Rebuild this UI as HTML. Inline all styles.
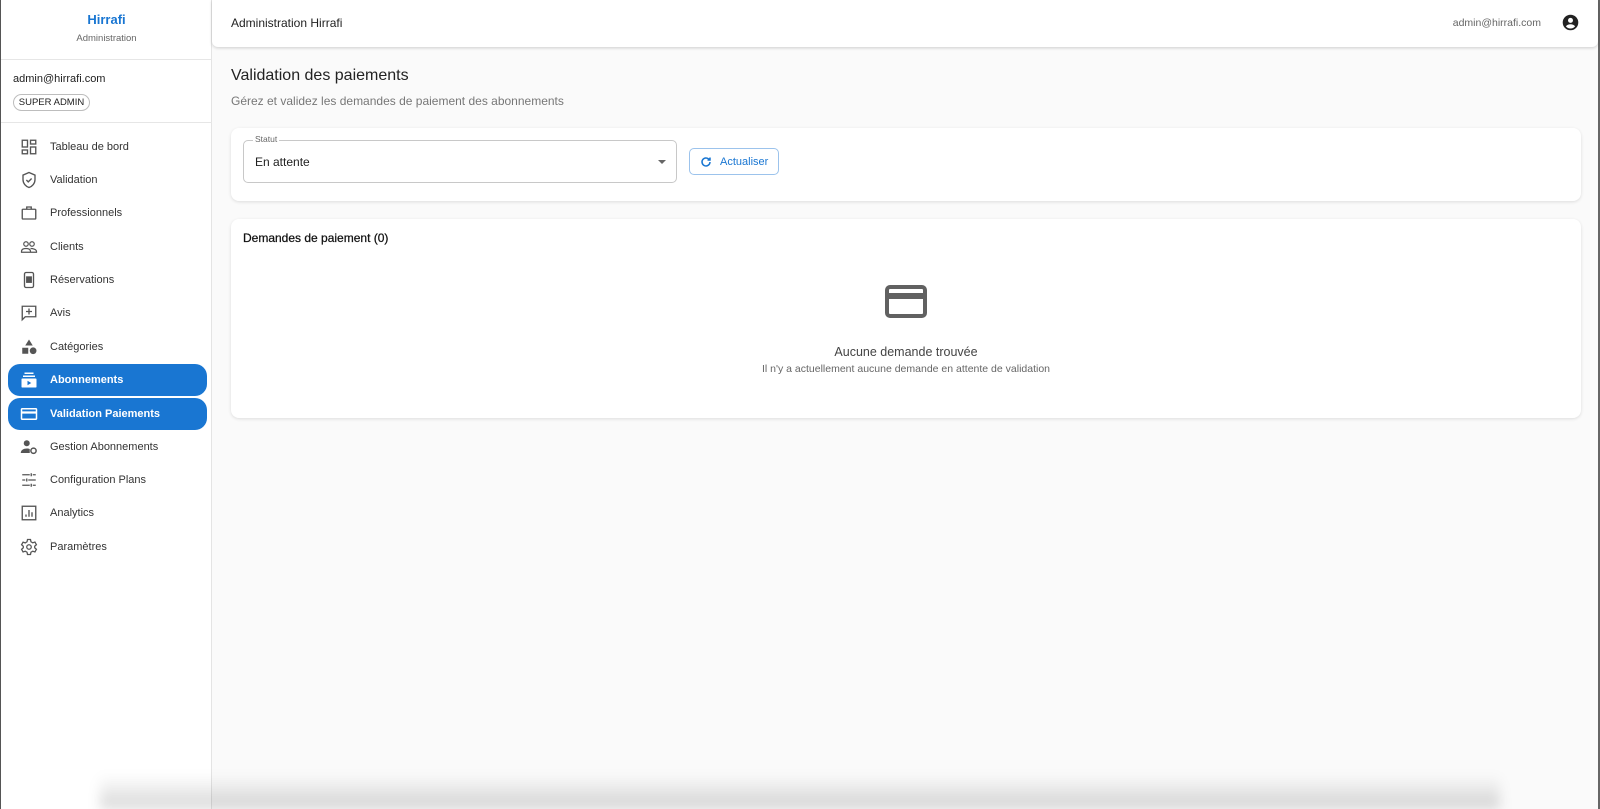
<!DOCTYPE html>
<html><head><meta charset="utf-8"><style>
*{box-sizing:border-box;margin:0;padding:0}
body{width:1600px;height:809px;overflow:hidden;background:#fafafa;font-family:"Liberation Sans",Roboto,sans-serif;position:relative;color:#212121}
.side{position:absolute;left:1px;top:0;width:211px;height:809px;background:#fff;border-right:1px solid #e4e4e4}
.brand{text-align:center;height:60px;border-bottom:1px solid #e6e6e6}
.brand .t{position:absolute;left:0;width:211px;top:12px;color:#1976d2;font-weight:bold;font-size:13px}
.brand .s{position:absolute;left:0;width:211px;top:33px;color:#666;font-size:9.5px}
.user{position:absolute;top:60px;left:0;width:211px;height:63px;border-bottom:1px solid #e6e6e6}
.user .e{position:absolute;left:12px;top:13px;font-size:11px}
.chip{position:absolute;left:12px;top:34px;width:77px;height:17px;border:1px solid #bdbdbd;border-radius:9px;font-size:9.5px;text-align:center;line-height:15px}
.item{position:absolute;left:7px;width:199px;height:32px;font-size:11px;color:#333}
.item span{position:absolute;left:42px;top:10px}
.item svg{position:absolute;left:12px;top:7px;width:18px;height:18px}
.item.a{background:#1976d2;color:#fff;border-radius:12px;font-weight:bold}
.hdr{position:absolute;left:212px;top:0;width:1386px;height:47px;background:#fff;border-radius:0 0 6px 6px;box-shadow:0 1px 3px rgba(0,0,0,.18)}
.card{position:absolute;left:231px;width:1350px;background:#fff;border-radius:8px;box-shadow:0 1px 3px rgba(0,0,0,.12)}
</style></head><body>
<div style="position:absolute;left:0;top:0;width:1px;height:809px;background:#555"></div>
<div style="position:absolute;right:0;top:0;width:2px;height:809px;background:#666"></div>
<div class="side">
<div class="brand"><div class="t">Hirrafi</div><div class="s">Administration</div></div>
<div class="user"><div class="e">admin@hirrafi.com</div><div class="chip">SUPER ADMIN</div></div>
<div class="item" style="top:131px"><svg viewBox="0 0 24 24" fill="none" stroke="#555" stroke-width="1.8"><rect x="3" y="3" width="7" height="9"/><rect x="14" y="3" width="7" height="5"/><rect x="14" y="12" width="7" height="9"/><rect x="3" y="16" width="7" height="5"/></svg><span>Tableau de bord</span></div>
<div class="item" style="top:164px"><svg viewBox="0 0 24 24" fill="none" stroke="#555" stroke-width="1.8"><path d="M12 2l8 3.5v6c0 5-3.5 9-8 10.5C7.5 20.5 4 16.5 4 11.5v-6z"/><path d="M8.5 12l2.5 2.5 4.5-4.5"/></svg><span>Validation</span></div>
<div class="item" style="top:197px"><svg viewBox="0 0 24 24" fill="none" stroke="#555" stroke-width="1.8"><rect x="3" y="7" width="18" height="13" rx="1"/><path d="M9 7V4h6v3"/></svg><span>Professionnels</span></div>
<div class="item" style="top:231px"><svg viewBox="0 0 24 24" fill="none" stroke="#555" stroke-width="1.6"><circle cx="8" cy="8" r="3"/><circle cx="16" cy="8" r="3"/><path d="M2 18c0-3 3-4 6-4s6 1 6 4v1H2zM14 14c3 0 8 1 8 4v1h-8"/></svg><span>Clients</span></div>
<div class="item" style="top:264px"><svg viewBox="0 0 24 24" fill="none" stroke="#555" stroke-width="1.8"><rect x="6" y="2" width="12" height="20" rx="2"/><rect x="9" y="8" width="6" height="7" fill="#555"/></svg><span>Réservations</span></div>
<div class="item" style="top:297px"><svg viewBox="0 0 24 24" fill="none" stroke="#555" stroke-width="1.8"><path d="M3 3h18v14H7l-4 4z"/><path d="M12 6v8M8 10h8"/></svg><span>Avis</span></div>
<div class="item" style="top:331px"><svg viewBox="0 0 24 24" fill="#555"><path d="M12 2l5 8H7z"/><rect x="3" y="13" width="8" height="8"/><circle cx="17.5" cy="17" r="4.5"/></svg><span>Catégories</span></div>
<div class="item a" style="top:364px"><svg viewBox="0 0 24 24" fill="#fff"><rect x="6" y="2" width="12" height="2"/><rect x="4" y="6" width="16" height="2"/><rect x="2" y="10" width="20" height="12" rx="1"/><path d="M10 13v6l5-3z" fill="#1976d2"/></svg><span>Abonnements</span></div>
<div class="item a" style="top:398px"><svg viewBox="0 0 24 24" fill="none" stroke="#fff" stroke-width="2"><rect x="2" y="5" width="20" height="14" rx="1"/><path d="M2 10h20" stroke-width="3"/></svg><span>Validation Paiements</span></div>
<div class="item" style="top:431px"><svg viewBox="0 0 24 24" fill="#555"><circle cx="9" cy="7" r="4"/><path d="M1 20c0-4 4-6 8-6 2 0 3 .3 4 .7V20z"/><circle cx="18" cy="17" r="3.5" fill="none" stroke="#555" stroke-width="2"/></svg><span>Gestion Abonnements</span></div>
<div class="item" style="top:464px"><svg viewBox="0 0 24 24" fill="none" stroke="#555" stroke-width="1.8"><path d="M3 5h10M17 5h4M15 3v4M3 12h4M11 12h10M9 10v4M3 19h10M17 19h4M15 17v4"/></svg><span>Configuration Plans</span></div>
<div class="item" style="top:497px"><svg viewBox="0 0 24 24" fill="none" stroke="#555" stroke-width="1.8"><rect x="3" y="3" width="18" height="18"/><path d="M8 17v-3M12 17V8M16 17v-6"/></svg><span>Analytics</span></div>
<div class="item" style="top:531px"><svg viewBox="0 0 24 24" fill="none" stroke="#555" stroke-width="1.7"><circle cx="12" cy="12" r="3"/><path d="M10 2h4l.6 3 2.4 1.4 2.9-1 2 3.5-2.3 2v2.2l2.3 2-2 3.5-2.9-1-2.4 1.4-.6 3h-4l-.6-3L7 17.6l-2.9 1-2-3.5 2.3-2V11L2.1 9l2-3.5 2.9 1L9.4 5z"/></svg><span>Paramètres</span></div>
</div>
<div class="hdr">
<div style="position:absolute;left:19px;top:16px;font-size:12px;color:#222">Administration Hirrafi</div>
<div style="position:absolute;right:57px;top:17px;font-size:10.5px;color:#666">admin@hirrafi.com</div>
<svg style="position:absolute;right:19px;top:14px" width="17" height="17" viewBox="0 0 24 24"><circle cx="12" cy="12" r="11" fill="#222"/><circle cx="12" cy="9" r="3.5" fill="#fff"/><path d="M5.5 17.5c1.5-2.2 4-3 6.5-3s5 .8 6.5 3c-1.6 2-4 3-6.5 3s-4.9-1-6.5-3z" fill="#fff"/></svg>
</div>
<div style="position:absolute;left:231px;top:67px;font-size:16px;color:#222">Validation des paiements</div>
<div style="position:absolute;left:231px;top:94px;font-size:12px;color:#777">Gérez et validez les demandes de paiement des abonnements</div>
<div class="card" style="top:128px;height:73px">
<div style="position:absolute;left:12px;top:12px;width:434px;height:43px;border:1px solid #c8c8c8;border-radius:5px">
<div style="position:absolute;left:9px;top:-7px;background:#fff;padding:0 2px;font-size:8.5px;color:#666">Statut</div>
<div style="position:absolute;left:11px;top:14px;font-size:12px">En attente</div>
<div style="position:absolute;right:10px;top:19px;border-left:4px solid transparent;border-right:4px solid transparent;border-top:4px solid #666"></div>
</div>
<div style="position:absolute;left:458px;top:20px;width:90px;height:27px;border:1px solid #9cc3ec;border-radius:5px;color:#1976d2;font-size:11px">
<svg style="position:absolute;left:10px;top:7px" width="12" height="12" viewBox="0 0 24 24" fill="none" stroke="#1976d2" stroke-width="3"><path d="M20 12a8 8 0 1 1-2.3-5.7"/><path d="M20 3v5h-5" fill="#1976d2"/></svg>
<span style="position:absolute;left:30px;top:7px">Actualiser</span></div>
</div>
<div class="card" style="top:219px;height:199px">
<div style="position:absolute;left:12px;top:12px;font-size:12px;color:#111;-webkit-text-stroke:0.25px #111">Demandes de paiement (0)</div>
<svg style="position:absolute;left:654px;top:66px" width="42" height="33" viewBox="0 0 42 33"><rect x="2" y="2" width="38" height="29" rx="3" fill="none" stroke="#616161" stroke-width="4"/><rect x="2" y="8" width="38" height="6" fill="#616161"/></svg>
<div style="position:absolute;left:0;width:1350px;top:126px;text-align:center;font-size:12.5px;color:#444">Aucune demande trouvée</div>
<div style="position:absolute;left:0;width:1350px;top:144px;text-align:center;font-size:10.5px;color:#666">Il n'y a actuellement aucune demande en attente de validation</div>
</div>
<div style="position:absolute;left:100px;right:100px;bottom:0;height:34px;background:linear-gradient(rgba(0,0,0,0),rgba(0,0,0,.16));filter:blur(6px)"></div>
</body></html>
